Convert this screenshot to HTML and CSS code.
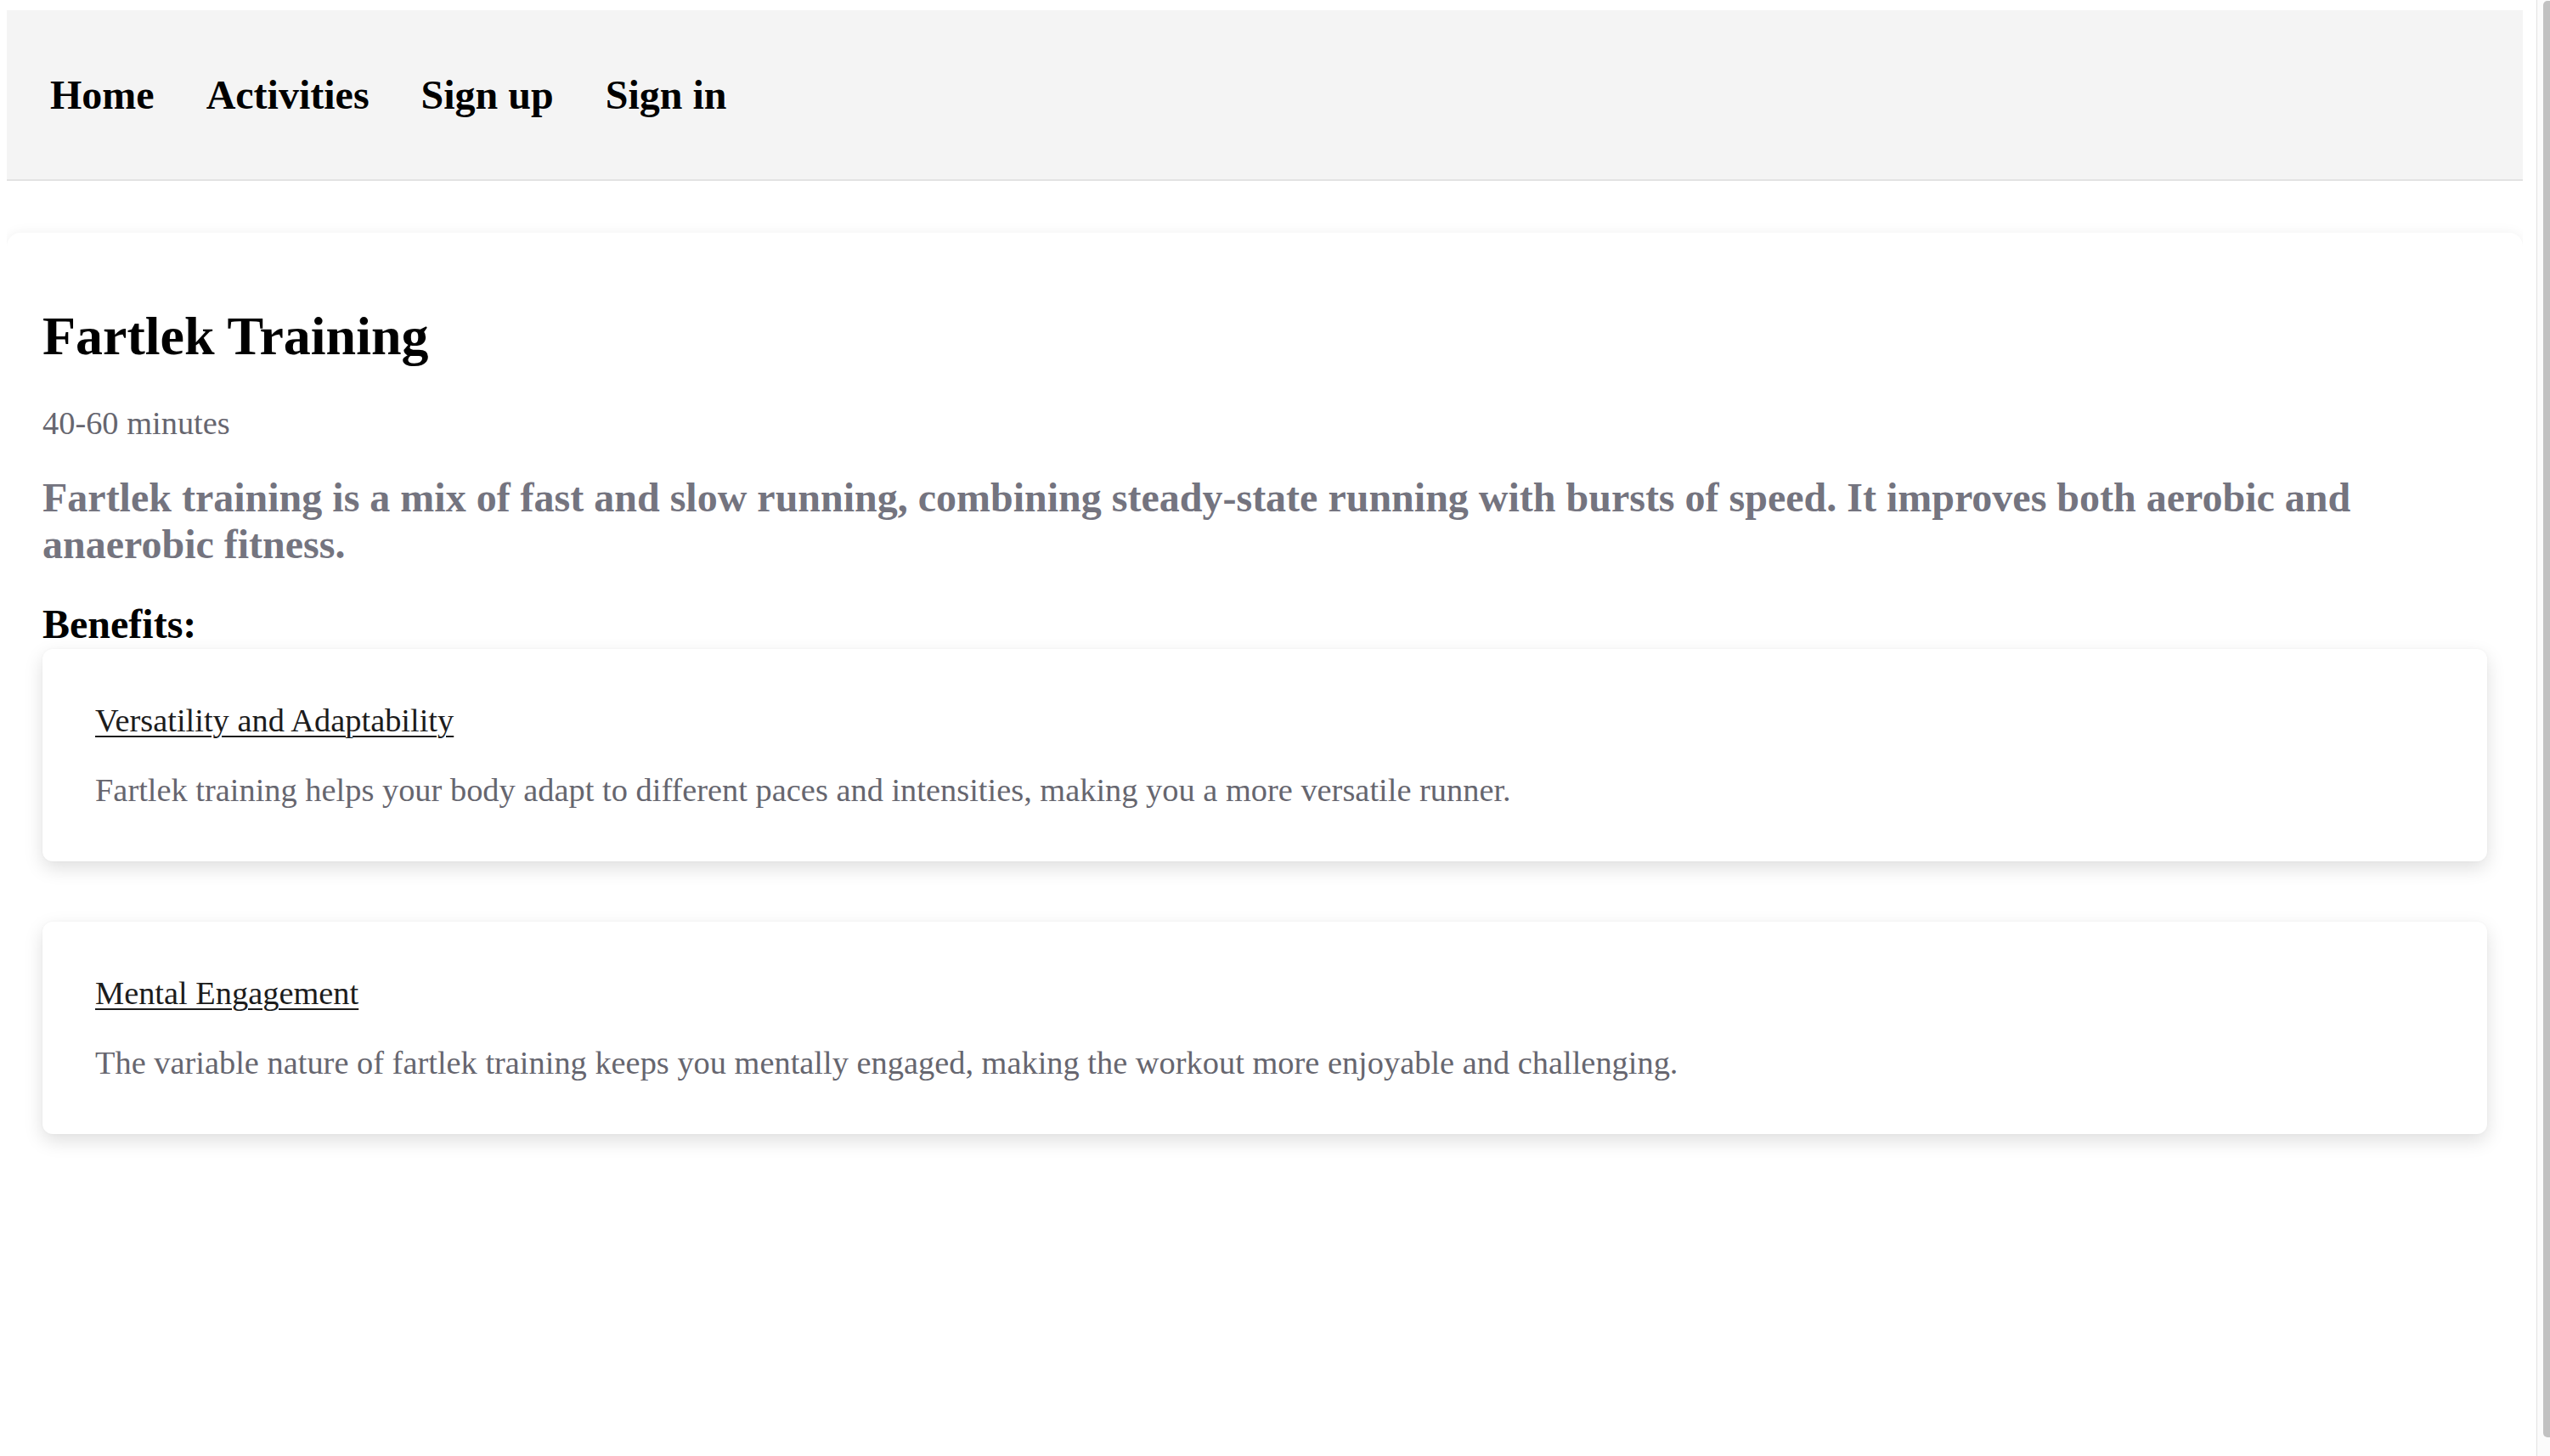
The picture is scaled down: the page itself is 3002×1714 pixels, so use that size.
FILE: index.html
```html
<!DOCTYPE html>
<html lang="en">
<head>
<meta charset="utf-8">
<title>Fartlek Training</title>
<link rel="stylesheet" href="styles.css">
</head>
<body>
  <nav class="nav">
    <a href="#" class="nav-link">Home</a>
    <a href="#" class="nav-link">Activities</a>
    <a href="#" class="nav-link">Sign up</a>
    <a href="#" class="nav-link">Sign in</a>
  </nav>
  <main class="activity">
    <h1 class="activity-title">Fartlek Training</h1>
    <p class="activity-duration">40-60 minutes</p>
    <p class="activity-desc">Fartlek training is a mix of fast and slow running, combining steady-state running with bursts of speed. It improves both aerobic and anaerobic fitness.</p>
    <h2 class="benefits-title">Benefits:</h2>
    <div class="benefit">
      <p class="benefit-title">Versatility and Adaptability</p>
      <p class="benefit-text">Fartlek training helps your body adapt to different paces and intensities, making you a more versatile runner.</p>
    </div>
    <div class="benefit">
      <p class="benefit-title">Mental Engagement</p>
      <p class="benefit-text">The variable nature of fartlek training keeps you mentally engaged, making the workout more enjoyable and challenging.</p>
    </div>
  </main>
  <div class="scrollbar" aria-hidden="true"><div class="scrollbar-thumb"></div></div>
</body>
</html>
```
FILE: styles.css
```css
html {
  background: #fff;
}
body {
  margin: 12px 32px 0 8px;
  font-family: "Liberation Serif", "Times New Roman", serif;
  background: #fff;
  color: #000;
}
.scrollbar {
  position: fixed;
  top: 0;
  right: 0;
  bottom: 0;
  width: 15px;
  background: #fbfbfb;
  border-left: 1px solid #e2e2e2;
}
.scrollbar-thumb {
  position: absolute;
  top: 1px;
  right: 0;
  width: 8px;
  bottom: 22px;
  background: #c1c1c1;
  border-radius: 5px 0 0 5px;
}
.nav {
  background: #f4f4f4;
  border-bottom: 2px solid #e3e3e3;
  height: 199px;
  display: flex;
  align-items: center;
  padding-left: 51px;
  gap: 61px;
}
.nav-link {
  font-size: 48px;
  font-weight: bold;
  color: #000;
  text-decoration: none;
}
.activity {
  display: block;
  margin-top: 61px;
  background: #fff;
  border-radius: 16px;
  box-shadow: 0 2px 16px rgba(0, 0, 0, 0.08);
  padding: 42px;
  min-height: 1460px;
}
.activity-title {
  font-size: 64px;
  font-weight: bold;
  margin: 43px 0;
}
.activity-duration {
  font-size: 38.4px;
  color: #66666f;
  margin: 0 0 38.4px;
}
.activity-desc {
  font-size: 48px;
  font-weight: bold;
  color: #74747f;
  margin: 0 0 39px;
}
.benefits-title {
  font-size: 48px;
  font-weight: bold;
  margin: 0 0 2px;
}
.benefit {
  background: #fff;
  border-radius: 12px;
  box-shadow: 0 8px 22px rgba(0, 0, 0, 0.13), 0 0 3px rgba(0, 0, 0, 0.04);
  padding: 62px;
  margin-bottom: 71px;
}
.benefit-title {
  font-size: 38.4px;
  color: #1c1c1c;
  text-decoration: underline;
  text-decoration-thickness: 2px;
  text-underline-offset: 5px;
  margin: 0 0 38px;
}
.benefit-text {
  font-size: 38.4px;
  color: #66666f;
  margin: 0;
}
```
